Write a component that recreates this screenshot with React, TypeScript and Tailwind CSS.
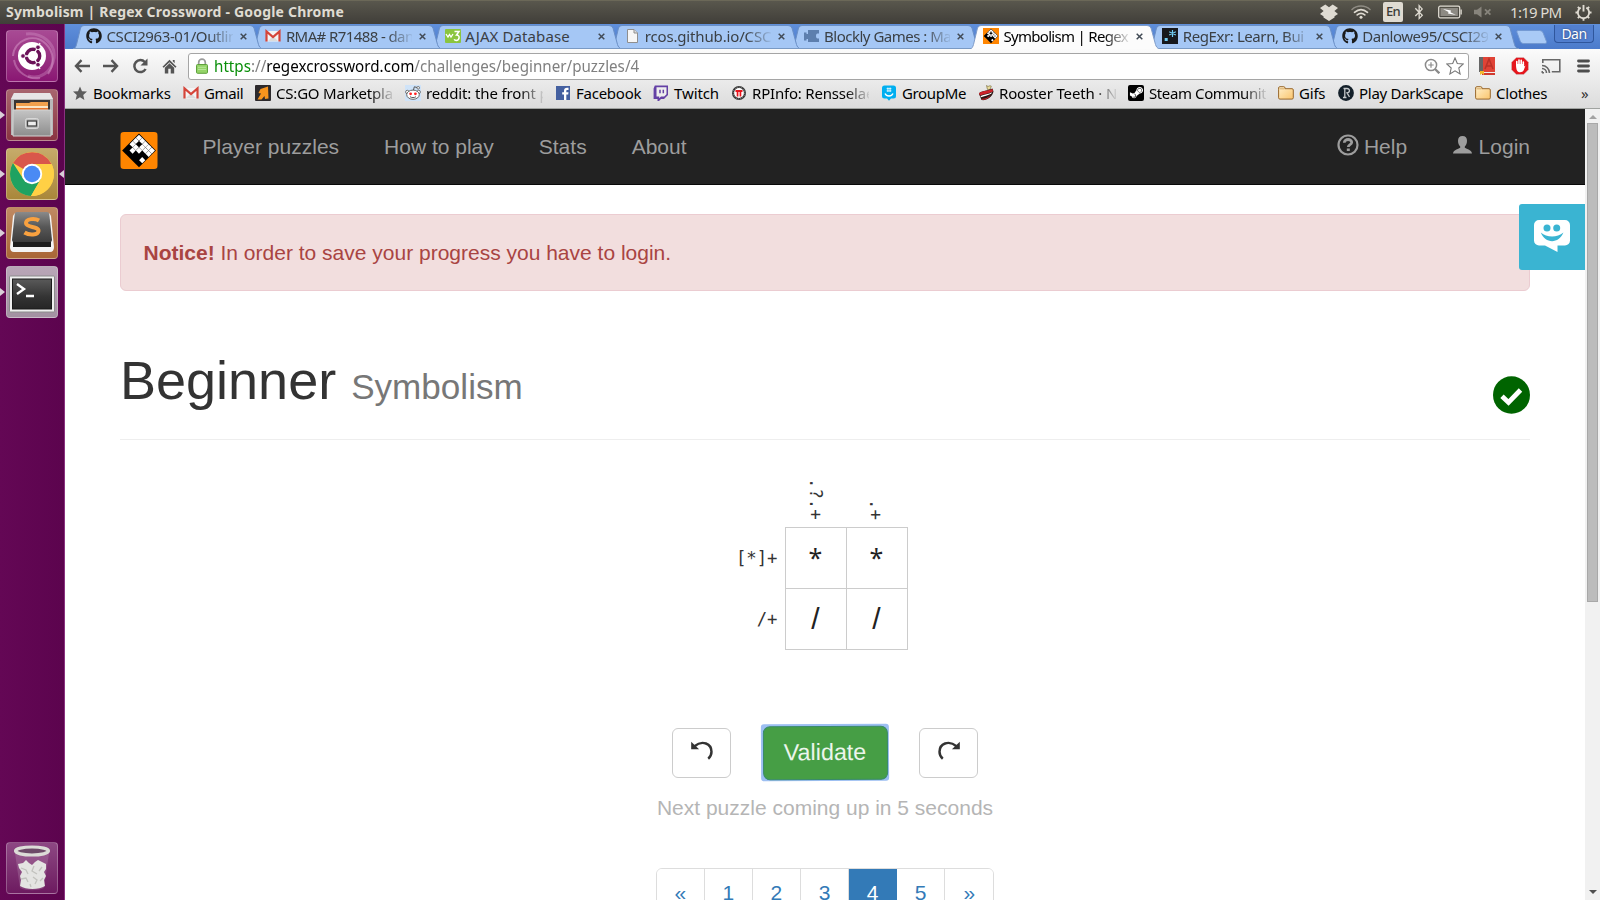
import type { ReactNode } from "react";
import { FaGithub, FaSteamSymbol, FaBluetoothB } from "react-icons/fa";

const UI = "font-['Noto_Sans',sans-serif]";

/* ---------- small drawings ---------- */

function RegexLogo({ className }: { className: string }) {
  const white = ["0,0", "1,0", "2,0", "3,0", "4,0", "0,1", "2,1", "3,1", "4,1", "0,2", "1,2", "2,2", "4,3", "1,3"];
  return (
    <svg viewBox="0 0 38 38" className={className}>
      <rect width="38" height="38" fill="#ff8500" />
      <g transform="translate(19 2.5) rotate(45)">
        <rect x="-0.6" y="-0.6" width="24.5" height="24.5" fill="#000" />
        {white.map((p) => {
          const [c, r] = p.split(",").map(Number);
          return <rect key={p} x={c * 4.66 + 0.15} y={r * 4.66 + 0.15} width="4.5" height="4.5" fill="#fff" />;
        })}
      </g>
    </svg>
  );
}

function GmailIcon() {
  return (
    <svg viewBox="0 0 16 16" className="size-4 shrink-0">
      <path d="M1.5 3h13v10.5h-13z" fill="#f4f4f4" />
      <path d="M3 13l5-5 5 5" fill="#dcdcdc" />
      <path d="M1.5 13.5V3.4L8 9l6.500-5.600v10.100" fill="none" stroke="#d5453a" strokeWidth="2.200" />
    </svg>
  );
}

function W3Icon() {
  return (
    <svg viewBox="0 0 16 14" className="h-3.5 w-4 shrink-0">
      <rect width="16" height="14" rx="1" fill="#8bc53f" />
      <path d="M1 5l2 3 1.500-2.500L6 8l2-3" fill="none" stroke="#fff" strokeWidth="1.300" />
      <path d="M9.500 2.500h4.500l-2.500 3.500c4 0 3 5.500-.3 5.500-1 0-1.700-.5-2-1.200" fill="none" stroke="#fff" strokeWidth="1.500" />
    </svg>
  );
}

function PageIcon() {
  return (
    <svg viewBox="0 0 16 16" className="size-4 shrink-0">
      <path d="M3.500 1.500h6.500l3.500 3.500v9.500H3.500z" fill="#f6f6f6" stroke="#8e8e8e" />
      <path d="M10 1.500v3.500h3.500" fill="#ddd" stroke="#8e8e8e" />
    </svg>
  );
}

function BlocklyIcon() {
  return (
    <svg viewBox="0 0 16 16" className="size-4 shrink-0">
      <path d="M4 2h11v3.500h-1.500c-2 0-2 5 0 5H15V14H4v-3H2.500v1.500H0V4.500h2.500V6H4z" fill="#5d7fae" />
    </svg>
  );
}

function RegexrIcon() {
  return (
    <svg viewBox="0 0 16 16" className="size-4 shrink-0">
      <rect width="16" height="16" fill="#17191d" />
      <rect x="2.700" y="10" width="3" height="3" fill="#72cdf4" />
      <path d="M10.500 2v7M7.200 3.800l6.600 3.200M13.800 3.800L7.200 7" stroke="#72cdf4" strokeWidth="1.200" />
    </svg>
  );
}

function CsgoIcon() {
  return (
    <svg viewBox="0 0 16 16" className="size-4 shrink-0">
      <rect width="16" height="16" rx="1" fill="#2d2a2c" />
      <path d="M5.500 4l7.500-2.500.5 12-3.500.5-.5-3-3 3.500H2.500l3.500-6L3.500 8z" fill="#f7941d" />
    </svg>
  );
}

function RedditIcon() {
  return (
    <svg viewBox="0 0 16 16" className="size-4 shrink-0">
      <rect width="16" height="16" fill="#cfe3f8" />
      <path d="M8.500 5l.8-3.200 3.200.8" fill="none" stroke="#555" />
      <circle cx="13.200" cy="2.800" r="1.300" fill="#fff" stroke="#555" strokeWidth=".8" />
      <circle cx="2.300" cy="7" r="1.700" fill="#fff" stroke="#555" strokeWidth=".8" />
      <circle cx="13.700" cy="7" r="1.700" fill="#fff" stroke="#555" strokeWidth=".8" />
      <ellipse cx="8" cy="9.700" rx="6.300" ry="4.600" fill="#fff" stroke="#555" strokeWidth=".9" />
      <circle cx="5.600" cy="8.800" r="1.400" fill="#f22" />
      <circle cx="10.400" cy="8.800" r="1.400" fill="#f22" />
      <path d="M5 11.700c1.800 1.200 4.200 1.200 6 0" fill="none" stroke="#444" strokeWidth=".9" />
    </svg>
  );
}

function FacebookIcon() {
  return (
    <svg viewBox="0 0 16 16" className="size-4 shrink-0">
      <rect x="1" y="1" width="14" height="14" fill="#4460a0" />
      <path d="M9 15V9.500H7.200V7.300H9V6c0-2.300 1.200-3.300 3.300-3.200h1.200V5h-1.200c-.8 0-1 .4-1 1.100v1.200h2.200l-.3 2.200h-1.900V15z" fill="#fff" />
    </svg>
  );
}

function TwitchIcon() {
  return (
    <svg viewBox="0 0 16 16" className="size-4 shrink-0">
      <path d="M1.800.500H15V10l-4 4H8l-2 2H4.500v-2H.600V3.500z" fill="#6441a5" />
      <path d="M3.500 2.200h10v7l-2.300 2.300H8l-1.800 1.700v-1.700H3.500z" fill="#eee" />
      <path d="M7 4.700v3.500M10.300 4.700v3.500" stroke="#6441a5" strokeWidth="1.500" />
    </svg>
  );
}

function RpiIcon() {
  return (
    <svg viewBox="0 0 16 16" className="size-4 shrink-0">
      <circle cx="8" cy="8" r="7" fill="#333" />
      <circle cx="8" cy="8" r="5.800" fill="none" stroke="#999" strokeDasharray="1 1.200" />
      <circle cx="8" cy="8" r="4.900" fill="#fff" />
      <path d="M4.500 5h7v2h-1.200v4.500H8.600V7H7.400v4.500H5.700V7H4.500z" fill="#e8141c" />
    </svg>
  );
}

function GroupMeIcon() {
  return (
    <svg viewBox="0 0 16 16" className="size-4 shrink-0">
      <path d="M3.500.500h9A2.500 2.500 0 0 1 15 3v8a2.500 2.500 0 0 1-2.500 2.500H10L8 15.800 6 13.500H3.500A2.500 2.500 0 0 1 1 11V3A2.500 2.500 0 0 1 3.500.500z" fill="#00aff0" />
      <path d="M6.900 2.500v4.500M9.100 2.500v4.500M5.600 3.700h4.800M5.600 5.900h4.800" stroke="#fff" strokeWidth=".8" />
      <path d="M4 8.500c1.500 3.300 6.500 3.300 8 0" fill="none" stroke="#fff" strokeWidth="1.300" />
    </svg>
  );
}

function RoosterIcon() {
  return (
    <svg viewBox="0 0 16 16" className="size-4 shrink-0">
      <path d="M8.500.500l1.500 1 2-.8 1.300.5L12 4.500H9.500z" fill="#e9dc9a" stroke="#6d6231" strokeWidth=".6" />
      <path d="M1 9C2 5.500 9 6 14.500 3.500l1 3C14.500 12 8 16 3.500 15l-1-2.500z" fill="#2a1614" />
      <path d="M1 8.500C3 5.500 9 6.500 14.500 4l.5 2.500C11 8.500 6 9 2 10.500z" fill="#cc2229" />
      <path d="M2.500 11C6 9.500 11 9 14 7.200l-.8 1.600C10 10.500 6 11.200 3 12.200z" fill="#fff" />
      <path d="M3.500 13.700c4 .3 6.500-1.500 9-3.700-1.500 3.200-5.500 5.500-8.500 4.700z" fill="#cc2229" />
    </svg>
  );
}

function SteamIcon() {
  return (
    <span className="flex size-4 shrink-0 items-center justify-center rounded-[2px] bg-black text-white">
      <FaSteamSymbol className="size-[15px]" />
    </span>
  );
}

function FolderIcon() {
  return (
    <svg viewBox="0 0 16 16" className="size-4 shrink-0">
      <defs>
        <linearGradient id="fold" x1="0" y1="0" x2="1" y2="1">
          <stop offset="0" stopColor="#fff0cc" />
          <stop offset="1" stopColor="#fbc56c" />
        </linearGradient>
      </defs>
      <path d="M.600 4.200V3c0-.8.400-1.300 1.200-1.300h4c.8 0 1.200.5 1.200 1.300v.700h7c.8 0 1.300.4 1.300 1.200v7.900c0 .8-.5 1.300-1.300 1.300H1.900c-.8 0-1.300-.5-1.300-1.300z" fill="url(#fold)" stroke="#98672c" strokeWidth="1" />
      <path d="M1.500 3.800h5" stroke="#c99a55" strokeWidth=".8" />
    </svg>
  );
}

function DarkScapeIcon() {
  return (
    <svg viewBox="0 0 16 16" className="size-4 shrink-0">
      <circle cx="8" cy="8" r="7.900" fill="#14202a" />
      <path d="M5.500 3.500h3.500c3.500 0 3 4.300 0 4.300L11.500 12M6.800 3.500v9M5 12.500h3.500" fill="none" stroke="#c5c9cc" strokeWidth="1.300" />
    </svg>
  );
}

/* ---------- desktop top panel ---------- */

function TopPanel() {
  return (
    <header className={`flex h-6 shrink-0 items-center justify-between border-t border-[#6b6858] bg-linear-to-b from-[#59574d] to-[#403e39] pr-2 pl-1.5 text-[#dfdbd2] ${UI}`}>
      <span className="-mt-0.5 text-[14px] leading-6 font-bold tracking-[0.19px] whitespace-pre">Symbolism | Regex Crossword - Google Chrome</span>
      <div className="-mt-px flex h-full items-center">
        <svg viewBox="0 0 18 17" className="h-[17px] w-[18px]">
          <path d="M5.300.500L9 3.300 12.700.500 18 4l-3.600 3L18 10l-3.500 2.300V13.500L9 17l-5.500-3.500v-1.200L0 10l3.600-3L0 4z" fill="#dfdbd2" />
        </svg>
        <svg viewBox="0 0 20 14" className="ml-[13px] h-3.5 w-5" fill="none" strokeLinecap="round">
          <path d="M1 4.500c5-4.600 13-4.600 18 0" stroke="#8f8c84" strokeWidth="1.500" />
          <path d="M3.500 7.300c4-3.400 9-3.400 13 0" stroke="#dfdbd2" strokeWidth="1.700" />
          <path d="M6.200 9.900c2.500-2 5.100-2 7.600 0" stroke="#dfdbd2" strokeWidth="1.700" />
          <circle cx="10" cy="12.300" r="1.500" fill="#dfdbd2" />
        </svg>
        <span className="ml-3 flex h-5 w-5 items-center justify-center rounded-[2px] bg-[#dfdbd2] text-[13px] font-medium tracking-[-0.7px] text-[#3c3b37]">En</span>
        <FaBluetoothB className="ml-2 size-4" />
        <svg viewBox="0 0 24 14" className="ml-[11px] h-3.5 w-6">
          <rect x=".7" y="1.200" width="21" height="11.600" rx="1.500" fill="none" stroke="#dfdbd2" strokeWidth="1.300" />
          <rect x="2.500" y="3" width="17.400" height="8" fill="#8d8a83" />
          <path d="M5 4l8 1.500-.5 1.800L18 10l-8-1.400.5-1.700z" fill="#fff" />
          <path d="M22.500 4.500h1.300v5h-1.300z" fill="#dfdbd2" />
        </svg>
        <svg viewBox="0 0 18 12" className="ml-3 h-3 w-[18px]">
          <path d="M0 3.800h3L7.500.500v11L3 8.200H0z" fill="#87847c" />
          <path d="M11 3.300l5.400 5.400M16.400 3.300L11 8.700" stroke="#87847c" strokeWidth="1.800" />
        </svg>
        <span className="ml-[18px] w-[52px] text-[15px] leading-6 tracking-[-0.7px] whitespace-pre">1:19 PM</span>
        <svg viewBox="0 0 18 18" className="ml-[13px] size-[17px]" fill="none" stroke="#dfdbd2">
          <path d="M6 3.900a6 6 0 1 0 6 0" strokeWidth="2" />
          <path d="M9 1v7" strokeWidth="2" />
          <path d="M.5 9h2M15.500 9h2M3 3l1.600 1.600M15 3l-1.600 1.600M3 15l1.600-1.600M15 15l-1.600-1.600M9 15.500v2.300" strokeWidth="2" />
        </svg>
      </div>
    </header>
  );
}

/* ---------- launcher ---------- */

function LauncherItem({ tint, running, focused, children }: { tint: string; running?: boolean; focused?: boolean; children: ReactNode }) {
  return (
    <div className="relative flex h-[52px] w-full items-center justify-center">
      {running && (
        <svg viewBox="0 0 5 8" className="absolute top-[22px] left-0 h-2 w-[5px]">
          <path d="M0 0l5 4-5 4z" fill="#d9cfd8" />
        </svg>
      )}
      {focused && (
        <svg viewBox="0 0 5 8" className="absolute top-[22px] right-0 h-2 w-[5px]">
          <path d="M5 0L0 4l5 4z" fill="#d9cfd8" />
        </svg>
      )}
      <div className={`mr-px flex size-[52px] items-center justify-center overflow-hidden rounded-[4px] border border-white/25 ${tint}`}>{children}</div>
    </div>
  );
}

function Launcher() {
  return (
    <nav className="flex w-[65px] shrink-0 flex-col justify-between border-r border-[#8b3280] bg-linear-to-r from-[#640755] to-[#5c044e] pt-1.5 pb-1.5">
      <div className="flex flex-col gap-[7px]">
        <LauncherItem tint="bg-linear-to-b from-[#a84a94] to-[#8a1673]">
          <svg viewBox="0 0 52 52" className="size-[52px] shrink-0">
            <path d="M7 26C8 10 28 2 40 14c8 8 9 20 2 30" fill="none" stroke="#d79aca" strokeOpacity=".5" strokeWidth="2" />
            <path d="M20 4c16-2 30 10 28 24S34 50 22 46" fill="none" stroke="#d79aca" strokeOpacity=".35" strokeWidth="3" />
            <path d="M8 30c2 12 14 20 26 18" fill="none" stroke="#d79aca" strokeOpacity=".45" strokeWidth="2" />
            <circle cx="26" cy="26" r="14" fill="#fff" />
            <circle cx="27" cy="26" r="6.700" fill="none" stroke="#6b1259" strokeWidth="3.400" />
            <path d="M27 26H12M27 26l7-13M27 26l7 13" stroke="#fff" strokeWidth="1.300" />
            <circle cx="17" cy="26" r="2.300" fill="#6b1259" stroke="#fff" strokeWidth=".8" />
            <circle cx="32" cy="17.300" r="2.300" fill="#6b1259" stroke="#fff" strokeWidth=".8" />
            <circle cx="32" cy="34.700" r="2.300" fill="#6b1259" stroke="#fff" strokeWidth=".8" />
            <circle cx="27" cy="26" r="4.500" fill="#fff" />
          </svg>
        </LauncherItem>
        <LauncherItem running tint="bg-linear-to-b from-[#a7656e] to-[#8a3442]">
          <svg viewBox="0 0 52 52" className="size-[52px] shrink-0">
            <defs>
              <linearGradient id="cab" x1="0" y1="0" x2="0" y2="1">
                <stop offset="0" stopColor="#c4c4c4" />
                <stop offset="1" stopColor="#8d8d8d" />
              </linearGradient>
            </defs>
            <path d="M8 4h36l3 6v36H5V10z" fill="#b9b9b9" />
            <path d="M8 4h36l3 6H5z" fill="#e6e6e6" />
            <path d="M8 11h36v11H8z" fill="#3b3533" />
            <path d="M10 14h13l2-1h17v9H10z" fill="#f2a04c" />
            <path d="M10 17h32v2H10z" fill="#fbe5c4" />
            <path d="M10 19h32v3H10z" fill="#e8762c" />
            <path d="M7 21h38v26H7z" fill="url(#cab)" stroke="#d4d4d4" />
            <rect x="19.500" y="29.500" width="13" height="10" rx="2" fill="#bdbdbd" stroke="#d8d8d8" />
            <rect x="21.500" y="32" width="9" height="5" fill="#eee" stroke="#444" strokeWidth="1.300" />
          </svg>
        </LauncherItem>
        <LauncherItem running focused tint="bg-linear-to-b from-[#c6ab6a] to-[#a9873a]">
          <svg viewBox="0 0 52 52" className="size-[52px] shrink-0">
            <circle cx="26" cy="26" r="22" fill="#ffd045" />
            <path d="M26 26L7 15A22 22 0 0 1 45.500 16H26z" fill="#d9574b" />
            <path d="M7 15A22 22 0 0 0 25 48L34.700 31 17.300 31z" fill="#1fa261" />
            <path d="M45.500 16A22 22 0 0 1 25 48L35 31 33 16z" fill="#ffd045" />
            <circle cx="26" cy="26" r="10.200" fill="#fff" />
            <circle cx="26" cy="26" r="8.300" fill="#4a8af4" />
          </svg>
        </LauncherItem>
        <LauncherItem running tint="bg-linear-to-b from-[#c08a63] to-[#a96636]">
          <svg viewBox="0 0 52 52" className="size-[52px] shrink-0">
            <defs>
              <linearGradient id="key" x1="0" y1="0" x2="0" y2="1">
                <stop offset="0" stopColor="#8a8a8a" />
                <stop offset=".5" stopColor="#575757" />
                <stop offset="1" stopColor="#3c3c3c" />
              </linearGradient>
            </defs>
            <path d="M7 9q1-3 3-3h32q2 0 3 3l3 31q0 5-4 5H8q-4 0-4-5z" fill="#f4f4f4" />
            <path d="M7 34h38v6H7z" fill="#1d1d1d" />
            <path d="M11 5h30q2 0 2.300 2L46 33q0 2-2 2H8q-2 0-2-2L8.700 7Q9 5 11 5z" fill="url(#key)" />
            <path d="M33 13.500c-4-2.500-13-2-13 2.500 0 5 13 3 12.500 8-.5 4.500-9.500 4.500-14 1.500" fill="none" stroke="#f9a13f" strokeWidth="4" />
          </svg>
        </LauncherItem>
        <LauncherItem running tint="bg-linear-to-b from-[#b9a6b7] to-[#a391a2]">
          <svg viewBox="0 0 52 52" className="size-[52px] shrink-0">
            <defs>
              <linearGradient id="term" x1="0" y1="0" x2="0" y2="1">
                <stop offset="0" stopColor="#5a5a5a" />
                <stop offset=".6" stopColor="#333" />
                <stop offset="1" stopColor="#262626" />
              </linearGradient>
            </defs>
            <rect x="3.500" y="10" width="45" height="36" rx="1" fill="#efefef" stroke="#8c8c8c" />
            <rect x="6.500" y="13" width="39" height="30" fill="url(#term)" stroke="#1b1b1b" />
            <path d="M11 18l7 5-7 5" fill="none" stroke="#fff" strokeWidth="2.400" />
            <path d="M20 30h8" stroke="#fff" strokeWidth="2.400" />
          </svg>
        </LauncherItem>
      </div>
      <LauncherItem tint="bg-linear-to-b from-[#8d4783] to-[#6d1a60]">
        <svg viewBox="0 0 52 52" className="size-[52px] shrink-0">
          <path d="M9 11h34l-5 35c-6 3-18 3-24 0z" fill="#fff" fillOpacity=".14" />
          <path d="M12 22l5-1 3-3 3 3 3 2 3-3 3-2 4 2 4 2v5l-2 3 2 4-2 4 1 6c-6 4-19 4-25 0l1-6-1-4 2-4-3-4z" fill="#e4e4e2" />
          <path d="M15 26l5 2 2 4M28 24l-2 5 5 3M36 25l-3 4M15 37l5-1 2 4M27 35l4 3-2 4M37 36l-3 3M24 42l1 3" fill="none" stroke="#c2c2be" strokeWidth="1.300" />
          <ellipse cx="26" cy="9" rx="16.500" ry="4" fill="#6d4a68" stroke="#dcdcd7" strokeWidth="3.200" />
        </svg>
      </LauncherItem>
    </nav>
  );
}

/* ---------- browser chrome ---------- */

const tabs: { icon: ReactNode; label: string; tracking: string; active?: boolean; layer: string; fade?: boolean }[] = [
  { icon: <FaGithub className="size-4 shrink-0 text-[#1b1b1b]" />, label: "CSCI2963-01/Outlin", tracking: "tracking-[-0.4px]", layer: "z-[8]", fade: true },
  { icon: <GmailIcon />, label: "RMA# R71488 - dan", tracking: "tracking-[-0.6px]", layer: "z-[7]", fade: true },
  { icon: <W3Icon />, label: "AJAX Database", tracking: "tracking-[0.1px]", layer: "z-[6]" },
  { icon: <PageIcon />, label: "rcos.github.io/CSC", tracking: "tracking-[-0.15px]", layer: "z-[5]", fade: true },
  { icon: <BlocklyIcon />, label: "Blockly Games : Ma", tracking: "tracking-[-0.5px]", layer: "z-[4]", fade: true },
  { icon: <RegexLogo className="size-4 shrink-0" />, label: "Symbolism | Regex", tracking: "tracking-[-0.7px]", active: true, layer: "z-[9]", fade: true },
  { icon: <RegexrIcon />, label: "RegExr: Learn, Bui", tracking: "tracking-[-0.42px]", layer: "z-[2]", fade: true },
  { icon: <FaGithub className="size-4 shrink-0 text-[#1b1b1b]" />, label: "Danlowe95/CSCI29", tracking: "tracking-[-0.45px]", layer: "z-[1]", fade: true },
];

function TabStrip() {
  return (
    <div className="flex h-[25px] items-stretch bg-linear-to-b from-[#5f8fdb] to-[#4c7bcb] pl-2">
      {tabs.map((t) => (
        <div key={t.label} className={`relative flex w-[179.4px] shrink-0 items-center pb-px pl-[13px] ${t.layer}`}>
          <svg viewBox="0 0 190 25" className="absolute top-0 left-0 h-[25px] w-[190px]">
            <path
              d="M0 25.500C2 24.500 3 22.500 3.500 20.500L7.500 4Q8.300 1.500 11 1.500H177Q180 1.500 181 4L185.500 20.500C186 22.500 187.500 24.500 190 25.500z"
              fill={t.active ? "#fcfcfc" : "#a5c7f5"}
              stroke={t.active ? "#7f9cc9" : "#6a8fc6"}
            />
            {!t.active && <path d="M0 24.500h190" stroke="#7a9ac4" />}
          </svg>
          <span className="relative flex shrink-0 items-center">{t.icon}</span>
          <span
            className={`relative -mt-px ml-[4.500px] w-[126px] shrink-0 overflow-hidden text-[15px] leading-6 whitespace-pre ${UI} ${t.tracking} ${t.active ? "text-black" : "text-[#3b4045]"} ${t.fade ? "[mask-image:linear-gradient(to_right,#000_80%,transparent_102%)]" : ""}`}
          >
            {t.label}
          </span>
          <svg viewBox="0 0 8 8" className="relative ml-[7px] size-[7px] shrink-0">
            <path d="M.8.800l6.400 6.400M7.200.800L.800 7.200" stroke="#414a55" strokeWidth="1.700" />
          </svg>
        </div>
      ))}
      <svg viewBox="0 0 34 16" className="mt-[5px] ml-[7.500px] h-4 w-[32px] shrink-0">
        <path d="M2 1h23q3 0 4 3l3.500 9q.5 2-2 2H8q-2.500 0-3.500-2.500L1 3Q.5 1 2 1z" fill="#a9caf6" stroke="#7297d0" />
      </svg>
      <span className={`ml-auto mr-1.5 mt-px flex h-[18px] w-[40px] items-center justify-center rounded-b-[4px] border border-t-0 border-[#2f569c] bg-[#527fcf] text-[14px] tracking-[-0.5px] text-white ${UI} [text-shadow:0_0_2px_#223a66]`}>Dan</span>
    </div>
  );
}

function Toolbar() {
  return (
    <div className="flex h-[34px] items-center">
      <div className="flex items-center pl-[9px] text-[#555]">
        <svg viewBox="0 0 16 14" className="h-3.5 w-4" fill="none" stroke="#555" strokeWidth="2.400"><path d="M7.500 1.200L2 7l5.500 5.800M2 7h14" /></svg>
        <svg viewBox="0 0 16 14" className="ml-[13px] h-3.5 w-4" fill="none" stroke="#555" strokeWidth="2.400"><path d="M8.500 1.200L14 7l-5.500 5.800M14 7H0" /></svg>
        <svg viewBox="0 0 16 16" className="ml-[13px] size-4">
          <path d="M12.800 4A6 6 0 1 0 13.600 11" fill="none" stroke="#555" strokeWidth="2.500" />
          <path d="M15.500.500v7h-7z" fill="#555" />
        </svg>
        <svg viewBox="0 0 16 16" className="ml-3.5 size-[15px]">
          <path d="M8 .800l7.500 7.400-1.300 1.200L8 3.400 1.800 9.400.500 8.200zM11.500 1h2v3.500l-2-2z" fill="#555" />
          <path d="M3 9.300l5-4.800 5 4.800V15.500H9.300V10.500H6.700v5H3z" fill="#555" />
        </svg>
      </div>
      <div className="ml-[11px] flex h-[27px] w-[1281px] items-center rounded-[3px] border border-[#a5a5a5] bg-white pr-1 pl-[7px]">
        <svg viewBox="0 0 12 16" className="h-4 w-3 shrink-0">
          <path d="M2.700 7V4.500a3.300 3.300 0 0 1 6.600 0V7" fill="none" stroke="#9b9b9b" strokeWidth="1.700" />
          <rect x=".5" y="6.500" width="11" height="8.800" rx="1" fill="#94d468" stroke="#5ea13c" />
          <path d="M2 9.300h8M2 11.500h8" stroke="#b8e69a" />
        </svg>
        <span className={`ml-[6px] origin-left scale-x-[0.893] text-[17px] leading-6 whitespace-pre text-[#808080] ${UI}`}>
          <span className="text-[#0a8f0a]">https</span>://<span className="text-black">regexcrossword.com</span>/challenges/beginner/puzzles/4
        </span>
        <svg viewBox="0 0 16 16" className="ml-auto size-4 shrink-0" fill="none" stroke="#8a8a8a">
          <circle cx="7" cy="7" r="5.600" strokeWidth="1.500" />
          <path d="M11 11l4.300 4.300" strokeWidth="2.300" />
          <path d="M7 4.300v5.400M4.300 7h5.400" strokeWidth="1.200" />
        </svg>
        <svg viewBox="0 0 18 18" className="ml-1.5 size-[18px] shrink-0">
          <path d="M9 1l2.300 5.500 6 .5-4.500 4 1.300 6L9 13.900 3.900 17l1.300-6-4.500-4 6-.5z" fill="#fff" stroke="#777" strokeWidth="1.100" />
        </svg>
      </div>
      <svg viewBox="0 0 16 19" className="ml-2.5 h-[19px] w-4">
        <rect x="0" y="0" width="5" height="15" fill="#666" />
        <rect x="4" y="0" width="12" height="15" fill="#e04336" />
        <path d="M3 16h13v2H3z" fill="#d03a2e" />
        <path d="M6 12l4-10 4 10M7.500 9h5" fill="none" stroke="#b93228" strokeWidth="1.500" />
        <path d="M1 14h4v4l-2-1.500L1 18z" fill="#f4b92c" />
      </svg>
      <svg viewBox="0 0 18 18" className="ml-4 size-[18px]">
        <path d="M5.300.500h7.400l4.800 4.800v7.400l-4.800 4.800H5.300L.500 12.700V5.300z" fill="#e5161d" stroke="#c9c9c9" strokeWidth=".5" />
        <path d="M5.800 8V4.500M8 7V3M10.200 7V3.300M12.300 8V5" stroke="#fff" strokeWidth="1.600" strokeLinecap="round" />
        <path d="M5 7h8.100v2.500l1.400-1-1.700 4.500c-1 2.500-5 3-6.500 1-1-1.500-1.300-4-1.300-7z" fill="#fff" />
      </svg>
      <svg viewBox="0 0 20 16" className="ml-3 h-4 w-5" fill="none" stroke="#686868">
        <path d="M1.800 5V1.800h17v12h-8" strokeWidth="1.600" />
        <path d="M1 7.500a7.500 7.500 0 0 1 7.500 7.500M1 10.500A4.500 4.500 0 0 1 5.500 15" strokeWidth="1.600" />
        <path d="M1 13l2 2H1z" fill="#686868" />
      </svg>
      <svg viewBox="0 0 13 14" className="ml-[16px] h-3.5 w-[13px]"><path d="M1.500 2h10M1.500 7h10M1.500 12h10" stroke="#4d4d4d" strokeWidth="2.800" strokeLinecap="round" /></svg>
    </div>
  );
}

const bookmarks: { icon: ReactNode; label: string; box: string; fade?: boolean }[] = [
  {
    icon: (
      <svg viewBox="0 0 16 16" className="size-4 shrink-0"><path d="M8 1.500l2 4.700 5 .4-3.800 3.300 1.200 5L8 12.200l-4.400 2.700 1.200-5L1 6.600l5-.4z" fill="#5c5c5c" /></svg>
    ),
    label: "Bookmarks", box: "w-[111px] tracking-[-0.24px]",
  },
  { icon: <GmailIcon />, label: "Gmail", box: "w-[72px] tracking-[-0.4px]" },
  { icon: <CsgoIcon />, label: "CS:GO Marketpla", box: "w-[150px] tracking-[-0.2px]", fade: true },
  { icon: <RedditIcon />, label: "reddit: the front p", box: "w-[150px] tracking-[-0.13px]", fade: true },
  { icon: <FacebookIcon />, label: "Facebook", box: "w-[98px] tracking-[-0.25px]" },
  { icon: <TwitchIcon />, label: "Twitch", box: "w-[78px] tracking-[-0.1px]" },
  { icon: <RpiIcon />, label: "RPInfo: Rensselae", box: "w-[150px] tracking-[-0.2px]", fade: true },
  { icon: <GroupMeIcon />, label: "GroupMe", box: "w-[97px] tracking-[-0.35px]" },
  { icon: <RoosterIcon />, label: "Rooster Teeth · N", box: "w-[150px] tracking-[-0.15px]", fade: true },
  { icon: <SteamIcon />, label: "Steam Communit", box: "w-[150px] tracking-[-0.4px]", fade: true },
  { icon: <FolderIcon />, label: "Gifs", box: "w-[60px] tracking-[-0.2px]" },
  { icon: <DarkScapeIcon />, label: "Play DarkScape", box: "w-[137px] tracking-[-0.28px]" },
  { icon: <FolderIcon />, label: "Clothes", box: "w-[106px] tracking-[-0.2px]" },
];

function BookmarksBar() {
  return (
    <div className={`flex h-[25px] items-center pb-1.5 pl-[7px] text-[15px] leading-5 text-black ${UI}`}>
      {bookmarks.map((b) => (
        <div key={b.label} className={`flex shrink-0 items-center gap-[5px] pr-3 ${b.box}`}>
          {b.icon}
          <span className={`min-w-0 flex-1 whitespace-pre ${b.fade ? "[mask-image:linear-gradient(to_right,#000_80%,transparent_102%)]" : ""}`}>{b.label}</span>
        </div>
      ))}
      <span className="text-[#333]">»</span>
    </div>
  );
}

/* ---------- page ---------- */

function NavBar() {
  return (
    <div className="flex h-[76px] shrink-0 items-center border-b border-[#080808] bg-[#222] px-[55px] text-[21px] text-[#9d9d9d]">
      <RegexLogo className="mt-[8px] h-[37px] w-[38px] rounded-[4px]" />
      <div className="ml-[44.500px] flex gap-[45px] whitespace-pre">
        <span>Player puzzles</span>
        <span>How to play</span>
        <span>Stats</span>
        <span>About</span>
      </div>
      <div className="ml-auto flex gap-[45.500px] whitespace-pre">
        <span className="flex items-center">
          <svg viewBox="0 0 22 22" className="-mt-1 mr-[5px] size-[22px]">
            <circle cx="11" cy="11" r="9.500" fill="none" stroke="#9d9d9d" strokeWidth="2.200" />
            <path d="M7.300 8.800C7.300 4.200 15 4.700 14.700 8.500 14.500 10.800 11.300 10.600 11.300 13" fill="none" stroke="#9d9d9d" strokeWidth="2.800" />
            <path d="M9.800 14.500h3v2.500h-3z" fill="#9d9d9d" />
          </svg>
          Help
        </span>
        <span className="flex items-center">
          <svg viewBox="0 0 19 18" className="-mt-[3px] mr-[7px] h-[18px] w-[19px]">
            <path d="M9.500 0c3 0 4.500 2 4.500 4.800 0 2.700-1 4.700-2.200 5.600v1.400c1 .9 6.700 1.700 7.200 5.700H0c.5-4 6.200-4.800 7.200-5.700v-1.400C6 9.500 5 7.500 5 4.800 5 2 6.500 0 9.500 0z" fill="#9d9d9d" />
          </svg>
          Login
        </span>
      </div>
    </div>
  );
}

const clueFont = "font-['DejaVu_Sans_Mono',monospace] text-[17.3px] leading-[22px] whitespace-pre text-[#333]";

function Puzzle() {
  return (
    <div className="grid grid-cols-[720px_123px] grid-rows-[87px_123px]">
      <span />
      <div className="grid grid-cols-[61px_60px] justify-items-center pb-[7.500px]">
        {[".?.+", ".+"].map((clue) => (
          <span key={clue} className={`self-end [writing-mode:vertical-rl] ${clueFont}`}>{clue}</span>
        ))}
      </div>
      <div className="grid grid-rows-2 items-center justify-items-end pr-[7.500px]">
        {["[*]+", "/+"].map((clue) => (
          <span key={clue} className={clueFont}>{clue}</span>
        ))}
      </div>
      <div className="grid grid-cols-[60px_60px] grid-rows-[60px_60px] gap-px bg-[#ccc] p-px text-[#222]">
        {["*", "*", "/", "/"].map((value, i) => (
          <span key={i} className={`bg-white pr-px text-center ${value === "*" ? "font-['Noto_Sans',sans-serif] text-[25px] leading-[59px]" : "text-[30px] leading-[59px]"}`}>{value}</span>
        ))}
      </div>
    </div>
  );
}

function TurnArrow({ flip }: { flip?: boolean }) {
  return (
    <svg viewBox="0 0 66 58" className={`-mt-[5px] h-[19px] w-[22px] ${flip ? "-scale-x-100" : ""}`}>
      <path d="M10 16C34-4 62 8 62 33c0 9-4 16-10 21" fill="none" stroke="#333" strokeWidth="7.500" />
      <path d="M0 2v23h24z" fill="#333" />
    </svg>
  );
}

function Controls() {
  return (
    <div className="mt-[74px] flex h-[58px] items-center justify-center gap-[30px]">
      <button className="flex h-[50px] w-[59px] items-center justify-center rounded-[6px] border border-[#ccc] bg-white"><TurnArrow /></button>
      <div className="-rotate-[0.3deg] rounded-[3px] bg-[#9dbff2] p-[1.5px]">
        <button className="flex h-[54px] w-[125px] items-center justify-center rounded-[7px] border border-[#398a6a] bg-[#469e45] text-[23.3px] text-white/90">Validate</button>
      </div>
      <button className="flex h-[50px] w-[59px] items-center justify-center rounded-[6px] border border-[#ccc] bg-white"><TurnArrow flip /></button>
    </div>
  );
}

function Pagination() {
  return (
    <div className="mt-[45px] flex justify-center text-[21px] leading-[30px] text-[#337ab7]">
      <div className="flex h-[51px] overflow-hidden rounded-[6px] border border-[#ddd]">
        {["«", "1", "2", "3", "4", "5", "»"].map((p) => (
          <span key={p} className={`w-[48.1px] border-r pt-[9px] text-center last:border-r-0 ${p === "4" ? "border-[#337ab7] bg-[#337ab7] text-white" : "border-[#ddd] bg-white"}`}>{p}</span>
        ))}
      </div>
    </div>
  );
}

function Page() {
  return (
    <main className="relative flex w-[1520px] flex-col overflow-hidden bg-white font-['Liberation_Sans',Arial,sans-serif]">
      <NavBar />
      <div className="mx-[55px] mt-[29px] flex h-[77px] shrink-0 items-center rounded-[6px] border border-[#ebccd1] bg-[#f2dede] pl-[22.5px] text-[21px] whitespace-pre text-[#a94442]">
        <b>Notice!</b> In order to save your progress you have to login.
      </div>
      <div className="mx-[55px] flex h-[149px] shrink-0 justify-between border-b border-[#eee] pt-[60px]">
        <h1 className="text-[54px] leading-[59px] whitespace-pre text-[#333]">
          Beginner <small className="text-[35.1px] text-[#777]">Symbolism</small>
        </h1>
        <svg viewBox="0 0 37 38" className="mt-[25px] h-[38px] w-[37px]">
          <ellipse cx="18.500" cy="19" rx="18.500" ry="18.800" fill="#006400" />
          <path d="M9 20.200l6.500 6.200L27.500 14" fill="none" stroke="#fff" strokeWidth="4.800" />
        </svg>
      </div>
      <Puzzle />
      <Controls />
      <p className="mt-[11px] text-center text-[21px] leading-[31px] text-[#b5b5b5]">Next puzzle coming up in 5 seconds</p>
      <Pagination />
      <div className="absolute top-[95px] right-0 flex size-[66px] items-start justify-center rounded-l-[3px] bg-[#3ab4d2] pt-4">
        <svg viewBox="0 0 36 32" className="h-8 w-9">
          <path d="M5 0h26a5 5 0 0 1 5 5v15.500a5 5 0 0 1-5 5h-7.500V32L11 25.500H5a5 5 0 0 1-5-5V5a5 5 0 0 1 5-5z" fill="#fff" />
          <circle cx="13" cy="8" r="3.500" fill="#3ab4d2" />
          <circle cx="22.700" cy="8" r="3.500" fill="#3ab4d2" />
          <path d="M6.800 12.500c6 5.300 16.500 5.300 22.600 0-4.500 11.500-18.200 11.500-22.600 0z" fill="#3ab4d2" />
        </svg>
      </div>
    </main>
  );
}

function Scrollbar() {
  return (
    <div className="flex w-[15px] flex-col bg-[#f1f1f1] pt-1.5 pb-1">
      <svg viewBox="0 0 8 4" className="h-1 w-2 self-center"><path d="M0 4l4-4 4 4z" fill="#a3a3a3" /></svg>
      <div className="mt-[4px] ml-[2px] h-[479px] w-[11px] border border-[#a8a8a8] bg-[#bcbcbc]" />
      <svg viewBox="0 0 8 4" className="mt-auto mb-0.5 h-1 w-2 self-center"><path d="M0 0l4 4 4-4z" fill="#505050" /></svg>
    </div>
  );
}

export default function App() {
  return (
    <div className="flex h-[900px] w-[1600px] flex-col overflow-hidden bg-white">
      <TopPanel />
      <div className="flex min-h-0 flex-1">
        <Launcher />
        <div className="flex min-w-0 flex-1 flex-col">
          <TabStrip />
          <div className="h-[60px] shrink-0 border-b border-[#a0a3a0] bg-linear-to-b from-[#fbfbfb] to-[#dcdcdc]">
            <Toolbar />
            <BookmarksBar />
          </div>
          <div className="flex min-h-0 flex-1">
            <Page />
            <Scrollbar />
          </div>
        </div>
      </div>
    </div>
  );
}
